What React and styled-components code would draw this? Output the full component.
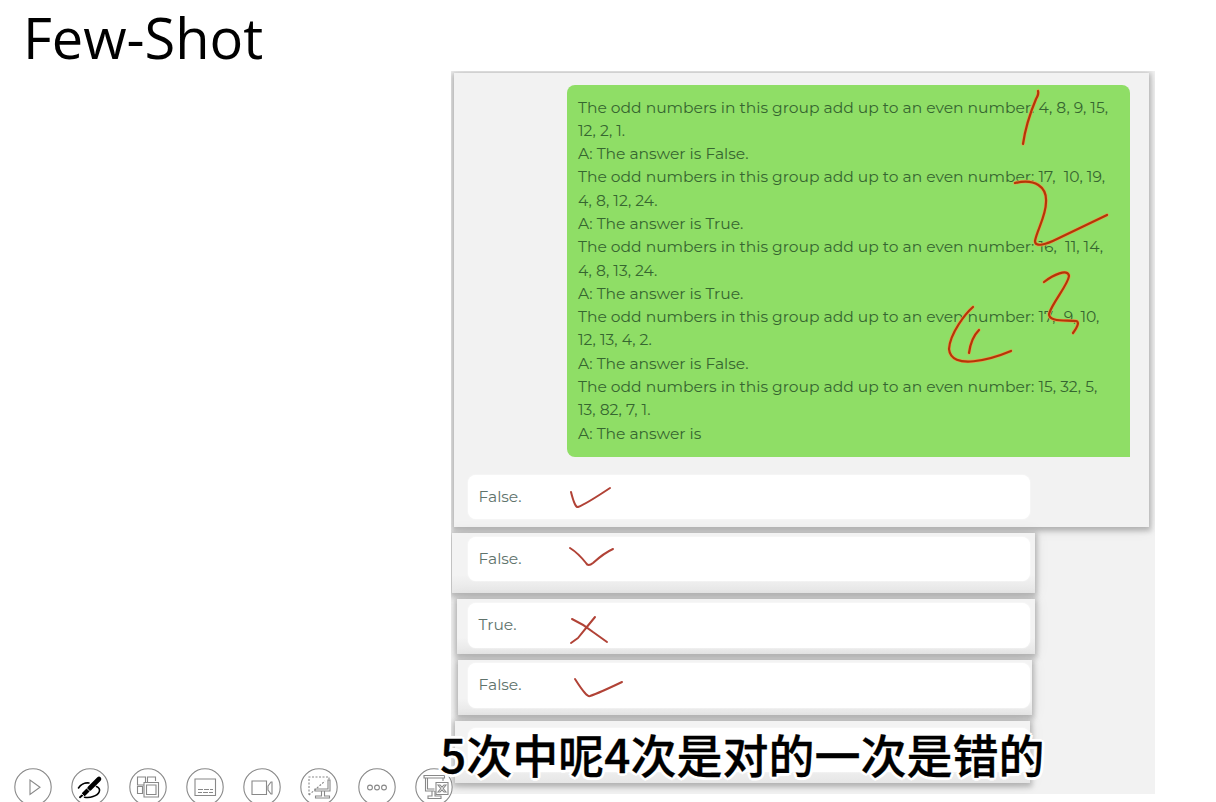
import React from "react";
import styled, { createGlobalStyle } from "styled-components";

const GlobalStyle = createGlobalStyle`
  * { box-sizing: border-box; }
  body { margin: 0; background: #fff; overflow: hidden; }
`;

const Slide = styled.main`
  position: relative;
  display: flex;
  width: 1216px;
  height: 802px;
  overflow: hidden;
  background: #fff;
`;

const SideColumn = styled.section`
  position: relative;
  z-index: 1;
  display: flex;
  flex-direction: column;
  justify-content: space-between;
  width: 451px;
  height: 806px;
`;

const Title = styled.h1`
  margin: 0;
  padding: 0 0 0 23px;
  font: 400 56px/74px "Open Sans", "Noto Sans", sans-serif;
  letter-spacing: -0.05px;
  color: #000;
  white-space: nowrap;
`;

const Toolbar = styled.nav`
  display: flex;
  gap: 19.3px;
  padding-left: 14px;
`;

const ToolButton = styled.button`
  flex: 0 0 38px;
  height: 38px;
  padding: 0;
  border: 0;
  border-radius: 50%;
  background: #fff;

  svg { display: block; }
`;

const Board = styled.section`
  width: 704px;
  height: 723px;
  margin-top: 71px;
  padding-top: 2px;
  display: flex;
  flex-direction: column;
  align-items: flex-start;
  gap: 6px;
  overflow: hidden;
  background: #f2f2f2;
`;

const Panel = styled.article`
  position: relative;
  flex: 0 0 auto;
  width: ${(p) => p.$w}px;
  height: ${(p) => p.$h}px;
  margin-left: ${(p) => p.$left}px;
  padding: ${(p) => p.$top}px 0 0 ${(p) => 16.5 - p.$left}px;
  background: ${(p) => (p.$plain ? "#f2f2f2" : "linear-gradient(#f3f3f3 70%, #e6e6e6)")};
  box-shadow: 0 2px 5px 2px rgba(0, 0, 0, 0.22), 0 1px 14px rgba(0, 0, 0, 0.1);
`;

const Prompt = styled.div`
  width: 563px;
  height: 371.5px;
  margin-left: 99.5px;
  padding: 10.5px 0 0 11px;
  border-radius: 8px 8px 0 8px;
  background: #8fde66;
  color: #366630;
  font: 400 15.52px/23.3px Montserrat, Inter, sans-serif;
`;

const Line = styled.div`
  height: 23.3px;
  white-space: pre;
`;

const Answer = styled.div`
  width: 562.5px;
  height: 44.5px;
  margin-top: ${(p) => p.$gap || 0}px;
  padding-left: 11px;
  border-radius: 8px;
  background: #fff;
  box-shadow: 0 0 2px #fff;
  color: #60736c;
  font: 400 15.5px/43.5px Montserrat, Inter, sans-serif;
`;

const Ink = styled.svg`
  position: absolute;
  inset: 0;
  z-index: 2;
  pointer-events: none;
  fill: none;
  stroke-linecap: round;
  stroke-linejoin: round;
`;

const Caption = styled.p`
  position: absolute;
  z-index: 3;
  left: 440px;
  top: 720px;
  margin: 0;
  font: 500 46px/66px "Noto Sans CJK SC", sans-serif;
  color: #000;
  white-space: nowrap;
  -webkit-text-stroke: 0.3px #000;
  text-shadow: 3px 0 #fff, -3px 0 #fff, 0 3px #fff, 0 -3px #fff,
    2px 2px #fff, -2px 2px #fff, 2px -2px #fff, -2px -2px #fff, 0 0 4px #fff;
`;

const question = "The odd numbers in this group add up to an even number: ";
const examples = [
  ["4, 8, 9, 15,", "12, 2, 1.", "A: The answer is False."],
  ["17,  10, 19,", "4, 8, 12, 24.", "A: The answer is True."],
  ["16,  11, 14,", "4, 8, 13, 24.", "A: The answer is True."],
  ["17,  9, 10,", "12, 13, 4, 2.", "A: The answer is False."],
  ["15, 32, 5,", "13, 82, 7, 1.", "A: The answer is"],
];

const icons = {
  play: <path d="M16 12v14.5l10-7.2z" />,
  pen: (
    <g stroke="#000" strokeLinecap="round">
      <path d="M7.500 20C9.500 16.500 14 14.500 18 15M25.500 18.500C31 21 28.500 26.500 22 28.500Q18 30 13.500 29.200" strokeWidth="1.6" />
      <path d="M18.500 20.500L28 11" strokeWidth="4.600" />
      <path d="M13 26L17 22" strokeWidth="4.200" />
      <path d="M9 29.200L11 27.500" strokeWidth="2" />
      <path d="M15.500 20L19.500 24M10.500 25.500L13 28" stroke="#fff" strokeWidth=".8" />
    </g>
  ),
  slides: (
    <g>
      <path d="M8.500 9h8v8h-8zM18.500 14V9h8v4M8.500 18.500h5v7h-5z" />
      <path fill="#fff" d="M15 14.500h14.500v14.500h-14.500z" />
      <path d="M17.500 17h9.500v9.500h-9.500z" />
    </g>
  ),
  subtitles: <path d="M9 11h20.500v16.500h-20.500zM12 21.500h5m1 0h5m1 0h3M12 24.500h4m1 0h5m1 0h4" />,
  camera: <path d="M9 13h14.500v13.500h-14.500zM25 18l3-4h1v12h-1l-3-4z" />,
  podium: (
    <g>
      <path d="M9 27V9h20v3M9 27L25 13" strokeDasharray="2 1.500" />
      <path d="M28 12h2v11h-15v-2h13zM21.500 23v5h-6v2h14v-2h-5v-5" />
    </g>
  ),
  more: (
    <g>
      <circle cx="12" cy="19.500" r="2.400" />
      <circle cx="19" cy="19.500" r="2.400" />
      <circle cx="26" cy="19.500" r="2.400" />
    </g>
  ),
  end: (
    <g>
      <path d="M9 7.500h20.500v2.500h-20.500zM10.500 10v13h9M12.500 10v11h7M28 10v3M17 23v5h-4v2.500h13v-2.500h-6v-5" />
      <path fill="#fff" d="M21 14.500h12v12h-12z" />
      <path d="M23 17h2l2 2.200 2-2.200h2l-2.800 3.500 2.800 3.500h-2l-2-2.200-2 2.200h-2l2.800-3.500z" />
    </g>
  ),
};

function Tool({ name }) {
  return (
    <ToolButton aria-label={name}>
      <svg width="38" height="38" viewBox="0 0 38 38" fill="none" stroke="#888" strokeWidth="1.1">
        <circle cx="19" cy="19" r="18.2" />
        {icons[name]}
      </svg>
    </ToolButton>
  );
}

const numberStrokes = [
  "M1038 91Q1039 94 1036 99Q1026 123 1023 144",
  "M1015 183C1035 178 1047 187 1046 202C1046 216 1037 230 1035 241C1035 248 1047 244 1057 239L1107 215",
  "M1044 282C1053 275 1068 268 1069 276C1068 285 1052 303 1049 314C1049 322 1064 320 1076 321Q1081 322 1073 333",
  "M973 307C966 313 950 333 949 349C951 371 992 359 1011 351",
  "M979 330Q971 338 969 353",
];

const markStrokes = [
  "M571 492Q575 508 578 507Q586 504 610 488",
  "M570 548Q578 553 586 563Q588 567 593 563Q604 553 613 549",
  "M572 619Q583 624 593 632L607 642M595 617Q586 628 578 638L571 643",
  "M575 679Q587 698 590 696Q599 693 622 682",
];

export default function App() {
  return (
    <>
      <GlobalStyle />
      <Slide>
        <SideColumn>
          <Title>Few-Shot</Title>
          <Toolbar>
            {Object.keys(icons).map((name) => <Tool key={name} name={name} />)}
          </Toolbar>
        </SideColumn>
        <Board>
          <Panel $left={3} $w={695} $h={454} $top={12} $plain>
            <Prompt>
              {examples.map(([numbers, rest, answer], i) => (
                <React.Fragment key={i}>
                  <Line>{question + numbers}</Line>
                  <Line>{rest}</Line>
                  <Line>{answer}</Line>
                </React.Fragment>
              ))}
            </Prompt>
            <Answer $gap={18}>False.</Answer>
          </Panel>
          <Panel $left={1} $w={583} $h={59.5} $top={3.5}><Answer>False.</Answer></Panel>
          <Panel $left={5.5} $w={578.5} $h={55} $top={4.5}><Answer>True.</Answer></Panel>
          <Panel $left={6.5} $w={574.5} $h={55} $top={3.5}><Answer>False.</Answer></Panel>
          <Panel $left={4} $w={575} $h={62.5} $top={7}><Answer /></Panel>
        </Board>
        <Ink width="1216" height="802" viewBox="0 0 1216 802">
          {numberStrokes.map((d) => (
            <React.Fragment key={d}>
              <path d={d} stroke="#e5a04c" strokeWidth="3.4" />
              <path d={d} stroke="#b63508" strokeWidth="2.2" />
            </React.Fragment>
          ))}
          {markStrokes.map((d) => <path key={d} d={d} stroke="#b14236" strokeWidth="2" />)}
        </Ink>
        <Caption>5次中呢4次是对的一次是错的</Caption>
      </Slide>
    </>
  );
}
